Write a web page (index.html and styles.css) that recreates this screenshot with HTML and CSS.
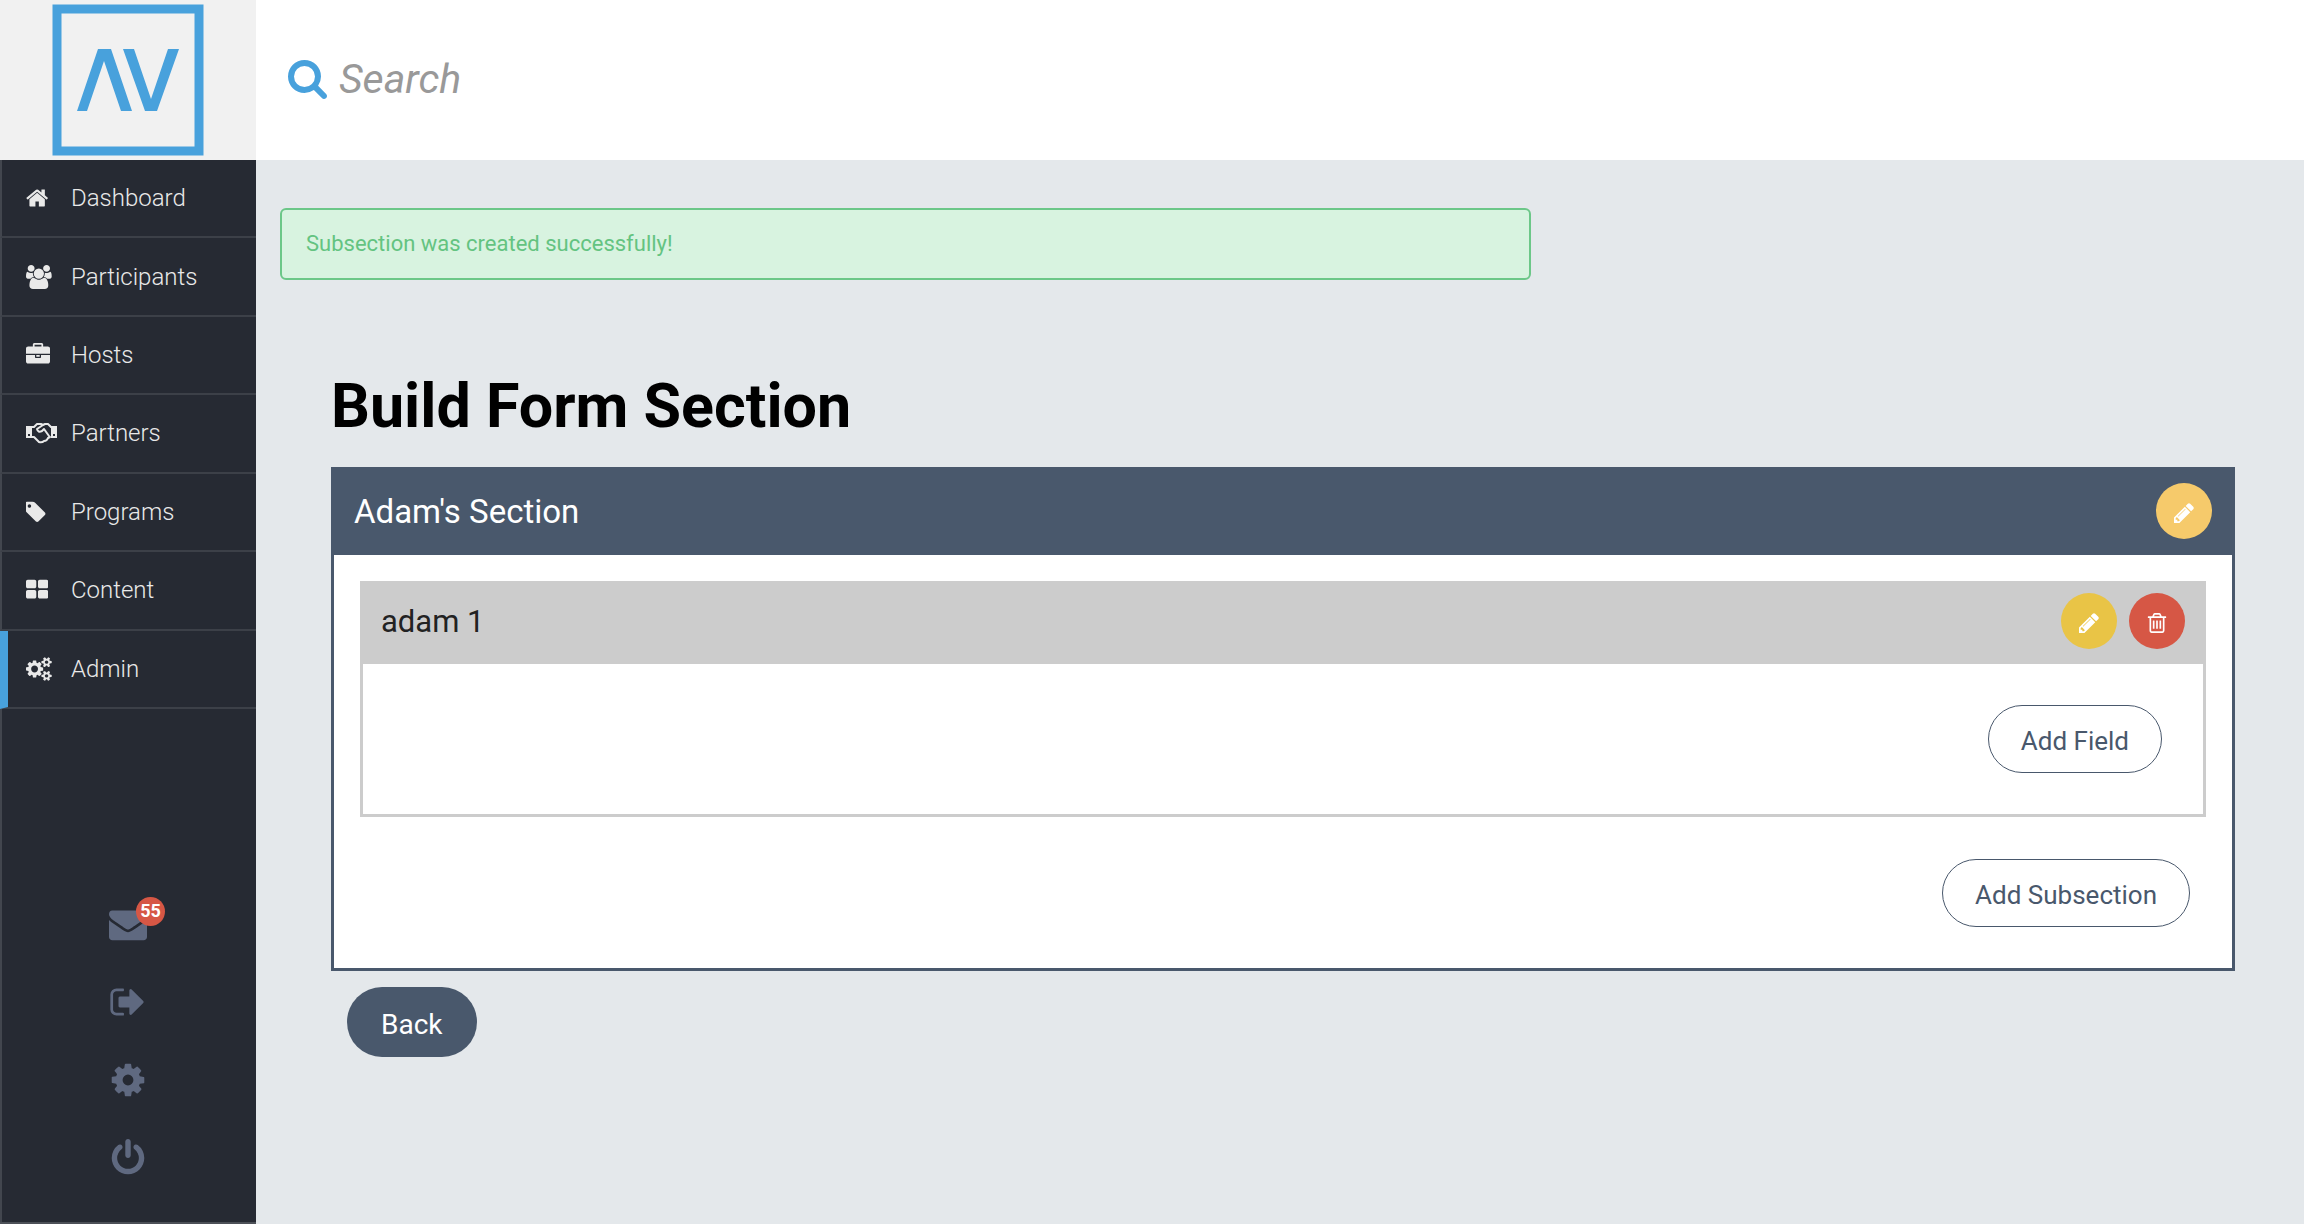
FILE: index.html
```html
<!DOCTYPE html>
<html lang="en">
<head>
    <meta charset="UTF-8">
    <meta name="viewport" content="width=device-width, initial-scale=1.0">
    <title>Build Form Section</title>
    <link rel="stylesheet" href="styles.css">
</head>
<body>
    <aside class="sidebar">
        <a class="logo" href="#" aria-label="Home">
            <svg viewBox="0 0 152 152">
                <rect x="5" y="5" width="142" height="142" fill="none" stroke="currentColor" stroke-width="9"/>
                <path fill="currentColor" d="M25 107 46 45h13l21 62H69L52 57 35 107zM71 45h11l17 50 17-50h11l-22 62H93z"/>
            </svg>
        </a>
        <ul class="nav">
            <li><a href="#">
                <svg class="icon" viewBox="64 0 1664 1792"><path d="M1472 992v480q0 26-19 45t-45 19h-384v-384h-256v384h-384q-26 0-45-19t-19-45v-480q0-1 .5-3t.5-3l575-474 575 474q1 2 1 6zm223-69l-62 74q-8 9-21 11h-3q-13 0-21-7l-692-577-692 577q-12 8-24 7-13-2-21-11l-62-74q-8-10-7-23.5t11-21.5l719-599q32-26 76-26t76 26l244 204v-195q0-14 9-23t23-9h192q14 0 23 9t9 23v408l219 182q10 8 11 21.5t-7 23.5z"/></svg>
                <span>Dashboard</span></a></li>
            <li><a href="#">
                <svg class="icon" viewBox="0 0 1920 1792"><path d="M593 896q-162 5-265 128H194q-82 0-138-40.5T0 865q0-353 124-353 6 0 43.5 21t97.5 42.5T384 597q67 0 133-23-5 37-5 66 0 139 81 256zm1071 637q0 120-73 189.5t-194 69.5H523q-121 0-194-69.5T256 1533q0-53 3.5-103.5t14-109T300 1212t43-97.5 62-81 85.5-53.5T602 960q10 0 43 21.5t73 48 107 48 135 21.5 135-21.5 107-48 73-48 43-21.5q61 0 111.5 20t85.5 53.5 62 81 43 97.5 26.5 108.5 14 109 3.5 103.5zM640 256q0 106-75 181t-181 75-181-75-75-181 75-181T384 0t181 75 75 181zm704 384q0 159-112.5 271.5T960 1024 688.5 911.5 576 640t112.5-271.5T960 256t271.5 112.5T1344 640zm576 225q0 78-56 118.5t-138 40.5h-134q-103-123-265-128 81-117 81-256 0-29-5-66 66 23 133 23 59 0 119-21.5t97.5-42.5 43.5-21q124 0 124 353zm-128-609q0 106-75 181t-181 75-181-75-75-181 75-181 181-75 181 75 75 181z"/></svg>
                <span>Participants</span></a></li>
            <li><a href="#">
                <svg class="icon" viewBox="0 0 1792 1792"><path d="M640 256h512v-128h-512v128zm1152 640v480q0 66-47 113t-113 47h-1472q-66 0-113-47t-47-113v-480h672v160q0 26 19 45t45 19h320q26 0 45-19t19-45v-160h672zm-768 0v128h-256v-128h256zm768-480v384h-1792v-384q0-66 47-113t113-47h352v-160q0-40 28-68t68-28h576q40 0 68 28t28 68v160h352q66 0 113 47t47 113z"/></svg>
                <span>Hosts</span></a></li>
            <li><a href="#">
                <svg class="icon" viewBox="0 0 31 24"><path fill-rule="evenodd" d="M0 5h6v12H0zM2 13v2h2v-2zM25 5h6v12h-6zM27 13v2h2v-2z"/><path fill="none" stroke="currentColor" stroke-width="2" stroke-linejoin="round" stroke-linecap="round" d="M6 6h2l3-3h4l2 1 2-1h3l3 3M6 16h2l5 5q3 1 5-1 3 0 4-3l2-1M17 4l-6 4q1 4 5 2l2-2 5 7"/></svg>
                <span>Partners</span></a></li>
            <li><a href="#">
                <svg class="icon" viewBox="192 0 1500 1792"><path d="M576 448q0-53-37.5-90.5t-90.5-37.5-90.5 37.5-37.5 90.5 37.5 90.5 90.5 37.5 90.5-37.5 37.5-90.5zm1067 576q0 53-37 90l-491 492q-39 37-91 37-53 0-90-37l-715-716q-38-37-64.5-101t-26.5-117v-416q0-52 38-90t90-38h416q53 0 117 26.5t102 64.5l715 714q37 39 37 91z"/></svg>
                <span>Programs</span></a></li>
            <li><a href="#">
                <svg class="icon" viewBox="64 0 1664 1792"><path d="M832 1024v384q0 52-38 90t-90 38h-512q-52 0-90-38t-38-90v-384q0-52 38-90t90-38h512q52 0 90 38t38 90zm0-768v384q0 52-38 90t-90 38h-512q-52 0-90-38t-38-90v-384q0-52 38-90t90-38h512q52 0 90 38t38 90zm896 768v384q0 52-38 90t-90 38h-512q-52 0-90-38t-38-90v-384q0-52 38-90t90-38h512q52 0 90 38t38 90zm0-768v384q0 52-38 90t-90 38h-512q-52 0-90-38t-38-90v-384q0-52 38-90t90-38h512q52 0 90 38t38 90z"/></svg>
                <span>Content</span></a></li>
            <li class="active"><a href="#">
                <svg class="icon" viewBox="0 0 1920 1792"><path d="M896 896q0-106-75-181t-181-75-181 75-75 181 75 181 181 75 181-75 75-181zm768 512q0-52-38-90t-90-38-90 38-38 90q0 53 37.5 90.5t90.5 37.5 90.5-37.5 37.5-90.5zm0-1024q0-52-38-90t-90-38-90 38-38 90q0 53 37.5 90.5T1536 512t90.5-37.5T1664 384zm-384 421v185q0 10-7 19.5t-16 10.5l-155 24q-11 35-32 76 34 48 90 115 7 11 7 20 0 12-7 19-23 30-82.5 89.5T999 1423q-11 0-21-7l-115-90q-37 19-77 31-11 108-23 155-7 24-30 24H547q-11 0-20-7.5t-10-17.5l-23-153q-34-10-75-31l-118 89q-7 7-20 7-11 0-21-8-144-133-144-160 0-9 7-19 10-14 41-53t47-61q-23-44-35-82l-152-24q-10-1-17-9.5T0 987V802q0-10 7-19.5T23 772l155-24q11-35 32-76-34-48-90-115-7-11-7-20 0-12 7-20 22-30 82-89t79-59q11 0 21 7l115 90q34-18 77-32 11-108 23-154 7-24 30-24h186q11 0 20 7.5t10 17.5l23 153q34 10 75 31l118-89q8-7 20-7 11 0 21 8 144 133 144 160 0 8-7 19-12 16-42 54t-45 60q23 48 34 82l152 23q10 2 17 10.5t7 19.5zm640 533v140q0 16-149 31-12 27-30 52 51 113 51 138 0 4-4 7-122 71-124 71-8 0-46-47t-52-68q-20 2-30 2t-30-2q-14 21-52 68t-46 47q-2 0-124-71-4-3-4-7 0-25 51-138-18-25-30-52-149-15-149-31v-140q0-16 149-31 13-29 30-52-51-113-51-138 0-4 4-7 4-2 35-20t59-34 30-16q8 0 46 46.5t52 67.5q20-2 30-2t30 2q51-71 92-112l6-2q4 0 124 70 4 3 4 7 0 25-51 138 17 23 30 52 149 15 149 31zm0-1024v140q0 16-149 31-12 27-30 52 51 113 51 138 0 4-4 7-122 71-124 71-8 0-46-47t-52-68q-20 2-30 2t-30-2q-14 21-52 68t-46 47q-2 0-124-71-4-3-4-7 0-25 51-138-18-25-30-52-149-15-149-31V314q0-16 149-31 13-29 30-52-51-113-51-138 0-4 4-7 4-2 35-20t59-34 30-16q8 0 46 46.5t52 67.5q20-2 30-2t30 2q51-71 92-112l6-2q4 0 124 70 4 3 4 7 0 25-51 138 17 23 30 52 149 15 149 31z"/></svg>
                <span>Admin</span></a></li>
        </ul>
        <div class="tools">
            <a class="mail" href="#" aria-label="Messages">
                <svg class="tool-icon" viewBox="0 0 1792 1792"><path d="M1792 710v794q0 66-47 113t-113 47h-1472q-66 0-113-47t-47-113v-794q44 49 101 87 362 246 497 345 57 42 92.5 65.5t94.5 48 110 24.5h2q51 0 110-24.5t94.5-48 92.5-65.5q170-123 498-345 57-39 100-87zm0-294q0 79-49 151t-122 123q-376 261-468 325-10 7-42.5 31t-54 38.5-52 32.5-57.5 27-50 9h-2q-23 0-50-9t-57.5-27-52-32.5-54-38.5-42.5-31q-91-64-262-182.5t-205-142.5q-62-42-117-115.5t-55-136.5q0-78 41.5-130t118.5-52h1472q65 0 112.5 47t47.5 113z"/></svg>
                <span class="badge">55</span>
            </a>
            <a href="#" aria-label="Exit">
                <svg class="tool-icon" viewBox="0 0 1792 1792"><path d="M704 1440q0 4 1 20t.5 26.5-3 23.5-10 19.5-20.5 6.5h-320q-119 0-203.5-84.5t-84.5-203.5v-704q0-119 84.5-203.5t203.5-84.5h320q13 0 22.5 9.5t9.5 22.5q0 4 1 20t.5 26.5-3 23.5-10 19.5-20.5 6.5h-320q-66 0-113 47t-47 113v704q0 66 47 113t113 47h312l11.5 1 11.5 3 8 5.5 7 9 2 13.5zm928-544q0 26-19 45l-544 544q-19 19-45 19t-45-19-19-45v-288h-448q-26 0-45-19t-19-45v-384q0-26 19-45t45-19h448v-288q0-26 19-45t45-19 45 19l544 544q19 19 19 45z"/></svg>
            </a>
            <a href="#" aria-label="Settings">
                <svg class="tool-icon" viewBox="0 0 1792 1792"><path d="M1152 896q0-106-75-181t-181-75-181 75-75 181 75 181 181 75 181-75 75-181zm512-109v222q0 12-8 23t-20 13l-185 28q-19 54-39 91 35 50 107 138 10 12 10 25t-9 23q-27 37-99 108t-94 71q-12 0-26-9l-138-108q-44 23-91 38-16 136-29 186-7 28-36 28h-222q-14 0-24.5-8.5t-11.5-21.5l-28-184q-49-16-90-37l-141 107q-10 9-25 9-14 0-25-11-126-114-165-168-7-10-7-23 0-12 8-23 15-21 51-66.5t54-70.5q-27-50-41-99l-183-27q-13-2-21-12.5t-8-23.5v-222q0-12 8-23t19-13l186-28q14-46 39-92-40-57-107-138-10-12-10-24 0-10 9-23 26-36 98.5-107.5t94.5-71.5q13 0 26 10l138 107q44-23 91-38 16-136 29-186 7-28 36-28h222q14 0 24.5 8.5t11.5 21.5l28 184q49 16 90 37l142-107q9-9 24-9 13 0 25 10 129 119 165 170 7 8 7 22 0 12-8 23-15 21-51 66.5t-54 70.5q26 50 41 98l183 28q13 2 21 12.5t8 23.5z"/></svg>
            </a>
            <a href="#" aria-label="Log out">
                <svg class="tool-icon" viewBox="0 0 1792 1792"><path d="M1664 896q0 156-61 298t-164 245-245 164-298 61-298-61-245-164-164-245-61-298q0-182 80.5-343t226.5-270q43-32 95.5-25t83.5 50q32 42 24.5 94.5t-49.5 84.5q-98 74-151.5 181t-53.5 228q0 104 40.5 198.5t109.5 163.5 163.5 109.5 198.5 40.5 198.5-40.5 163.5-109.5 109.5-163.5 40.5-198.5q0-121-53.5-228t-151.5-181q-42-32-49.5-84.5t24.5-94.5q31-43 84-50t95 25q146 109 226.5 270t80.5 343zm-640-768v640q0 52-38 90t-90 38-90-38-38-90v-640q0-52 38-90t90-38 90 38 38 90z"/></svg>
            </a>
        </div>
    </aside>

    <div class="page">
        <header class="topbar">
            <label class="search">
                <svg class="search-icon" viewBox="64 128 1664 1664"><path d="M1216 832q0-185-131.5-316.5t-316.5-131.5-316.5 131.5-131.5 316.5 131.5 316.5 316.5 131.5 316.5-131.5 131.5-316.5zm512 832q0 52-38 90t-90 38q-54 0-90-38l-343-342q-179 124-399 124-143 0-273.5-55.5t-225-150-150-225-55.5-273.5 55.5-273.5 150-225 225-150 273.5-55.5 273.5 55.5 225 150 150 225 55.5 273.5q0 220-124 399l343 343q37 37 37 90z"/></svg>
                <input type="text" placeholder="Search" aria-label="Search">
            </label>
        </header>
        <main>
            <div class="alert">Subsection was created successfully!</div>
            <div class="content">
                <h1>Build Form Section</h1>
                <section class="section">
                    <div class="section-header">
                        <h2>Adam's Section</h2>
                        <button class="round edit-section" aria-label="Edit section">
                            <svg viewBox="128 128 1536 1536"><path d="M491 1536l91-91-235-235-91 91v107h128v128h107zm523-928q0-22-22-22-10 0-17 7l-542 542q-7 7-7 17 0 22 22 22 10 0 17-7l542-542q7-7 7-17zm-54-192l416 416-832 832h-416v-416zm683 96q0 53-37 90l-166 166-416-416 166-165q36-38 90-38 53 0 91 38l235 234q37 39 37 91z"/></svg>
                        </button>
                    </div>
                    <div class="section-body">
                        <div class="subsection">
                            <div class="subsection-header">
                                <h3>adam 1</h3>
                                <button class="round edit" aria-label="Edit subsection">
                                    <svg viewBox="128 128 1536 1536"><path d="M491 1536l91-91-235-235-91 91v107h128v128h107zm523-928q0-22-22-22-10 0-17 7l-542 542q-7 7-7 17 0 22 22 22 10 0 17-7l542-542q7-7 7-17zm-54-192l416 416-832 832h-416v-416zm683 96q0 53-37 90l-166 166-416-416 166-165q36-38 90-38 53 0 91 38l235 234q37 39 37 91z"/></svg>
                                </button>
                                <button class="round delete" aria-label="Delete subsection">
                                    <svg viewBox="128 128 1536 1536"><path d="M704 736v576q0 14-9 23t-23 9h-64q-14 0-23-9t-9-23v-576q0-14 9-23t23-9h64q14 0 23 9t9 23zm256 0v576q0 14-9 23t-23 9h-64q-14 0-23-9t-9-23v-576q0-14 9-23t23-9h64q14 0 23 9t9 23zm256 0v576q0 14-9 23t-23 9h-64q-14 0-23-9t-9-23v-576q0-14 9-23t23-9h64q14 0 23 9t9 23zm128 724v-948h-896v948q0 22 7 40.5t14.5 27 10.5 8.5h832q3 0 10.5-8.5t14.5-27 7-40.5zm-672-1076h448l-48-117q-7-9-17-11h-317q-10 2-17 11zm928 32v64q0 14-9 23t-23 9h-96v948q0 83-47 143.5t-113 60.5h-832q-66 0-113-58.5t-47-141.5v-952h-96q-14 0-23-9t-9-23v-64q0-14 9-23t23-9h309l70-167q15-37 54-63t79-26h320q40 0 79 26t54 63l70 167h309q14 0 23 9t9 23z"/></svg>
                                </button>
                            </div>
                            <div class="subsection-body">
                                <button class="btn">Add Field</button>
                            </div>
                        </div>
                        <div class="section-actions">
                            <button class="btn">Add Subsection</button>
                        </div>
                    </div>
                </section>
                <a class="back" href="#">Back</a>
            </div>
        </main>
    </div>
</body>
</html>
```
FILE: styles.css
```css
* {
    box-sizing: border-box;
}
body {
    font-family: Roboto, "Liberation Sans", sans-serif;
    background-color: #e4e8eb;
    margin: 0;
    min-height: 100vh;
    display: flex;
}
a {
    color: inherit;
    text-decoration: none;
}
svg {
    display: block;
    fill: currentColor;
}
h1, h2, h3 {
    margin: 0;
}
.sidebar {
    width: 256px;
    flex-shrink: 0;
    background-color: #262a33;
    border-bottom: 2px solid #4c5057;
    display: flex;
    flex-direction: column;
}
.logo {
    height: 160px;
    background-color: #f1f1f1;
    color: #48a1dc;
    display: flex;
    align-items: center;
    justify-content: center;
}
.logo svg {
    width: 152px;
}
.nav {
    list-style-type: none;
    margin: 0;
    padding: 0;
    height: 549px;
    display: grid;
    grid-auto-rows: 1fr;
}
.nav li {
    border-left: 2px solid #42464e;
    border-bottom: 2px solid #3c4048;
}
.nav .active {
    border-left: 8px solid #48a1dc;
}
.nav a {
    height: 100%;
    padding-left: 24px;
    display: grid;
    grid-template-columns: 45px 1fr;
    align-items: center;
    color: #e9e9e9;
    font-size: 24px;
    font-weight: 300;
}
.nav .active a {
    padding-left: 18px;
}
.icon {
    height: 24px;
}
.tools {
    flex: 1;
    border-left: 2px solid #42464e;
    display: flex;
    flex-direction: column;
    justify-content: flex-end;
    align-items: center;
    gap: 40px;
    padding: 0 2px 45px 0;
    color: #5f6980;
}
.tool-icon {
    width: 38px;
    height: 38px;
}
.mail {
    position: relative;
}
.badge {
    position: absolute;
    top: -8px;
    right: -18px;
    width: 29px;
    height: 29px;
    border-radius: 50%;
    background-color: #d65745;
    color: white;
    font-size: 18px;
    font-weight: bold;
    line-height: 27px;
    text-align: center;
}
.page {
    flex: 1;
    min-width: 0;
}
.topbar {
    height: 160px;
    background-color: white;
    display: flex;
    align-items: center;
    padding: 0 32px 2px;
}
.search {
    display: flex;
    align-items: center;
    gap: 12px;
    flex: 1;
}
.search-icon {
    width: 39px;
    height: 39px;
    color: #48a1dc;
}
.search input {
    flex: 1;
    border: none;
    outline: none;
    padding: 0;
    font: italic 41px Roboto, "Liberation Sans", sans-serif;
}
.search input::placeholder {
    color: #999;
}
main {
    padding: 48px 69px 0 24px;
}
.alert {
    width: 64%;
    height: 72px;
    padding: 0 24px;
    border: 2px solid #6cc788;
    border-radius: 6px;
    background-color: #d8f3e0;
    color: #64c381;
    font-size: 22px;
    line-height: 68px;
}
.content {
    padding: 90px 0 0 51px;
}
h1 {
    color: black;
    font-size: 61px;
    line-height: 72px;
    margin-bottom: 25px;
}
.section {
    border: 3px solid #49586c;
    background-color: white;
}
.section-header {
    height: 85px;
    padding: 0 20px 3px;
    background-color: #49586c;
    color: white;
    display: flex;
    align-items: center;
    justify-content: space-between;
}
.section-header h2 {
    font-size: 33px;
    font-weight: normal;
}
.section-body {
    padding: 26px;
}
.subsection {
    border: 3px solid #ccc;
}
.subsection-header {
    height: 80px;
    padding: 0 18px 6px;
    background-color: #ccc;
    color: #222;
    display: flex;
    align-items: center;
    gap: 12px;
}
.subsection-header h3 {
    flex: 1;
    font-size: 31px;
    font-weight: normal;
}
.round {
    width: 56px;
    height: 56px;
    border: none;
    border-radius: 50%;
    padding: 3px 0 0;
    color: white;
    display: flex;
    align-items: center;
    justify-content: center;
}
.round svg {
    width: 20px;
}
.edit-section {
    background-color: #f6ca6b;
}
.edit {
    background-color: #e9c446;
}
.delete {
    background-color: #d65745;
}
.subsection-body {
    padding: 41px;
    display: flex;
    justify-content: flex-end;
}
.section-actions {
    padding: 42px 16px 15px;
    display: flex;
    justify-content: flex-end;
}
.btn {
    height: 68px;
    padding: 3px 32px 0;
    border: 1px solid #49586c;
    border-radius: 34px;
    background-color: white;
    color: #49586c;
    font-family: inherit;
    font-size: 26px;
}
.back {
    display: inline-block;
    height: 70px;
    margin: 16px;
    padding: 3px 34px 0;
    border-radius: 36px;
    background-color: #49586c;
    color: white;
    font-size: 28px;
    line-height: 70px;
}
```
